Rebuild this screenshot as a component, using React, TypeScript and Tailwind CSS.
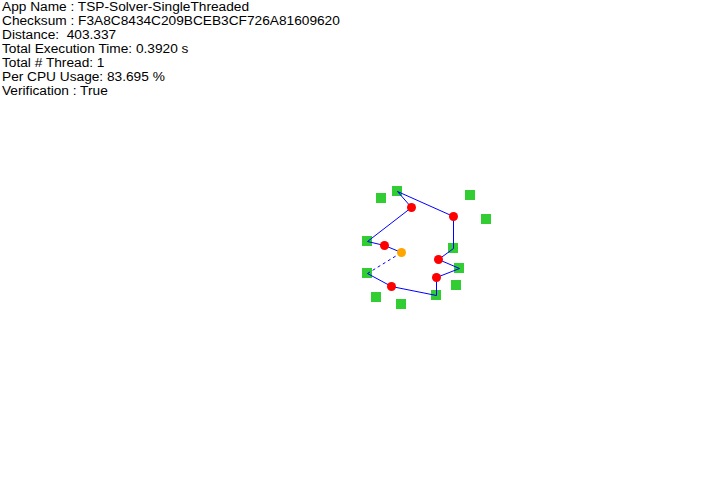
import React from "react";

const lines = [
  "App Name : TSP-Solver-SingleThreaded",
  "Checksum : F3A8C8434C209BCEB3CF726A81609620",
  "Distance:  403.337",
  "Total Execution Time: 0.3920 s",
  "Total # Thread: 1",
  "Per CPU Usage: 83.695 %",
  "Verification : True",
];

const squares: [number, number][] = [
  [381, 198], [397, 191], [470, 195], [486, 219], [367, 241], [453, 248],
  [459, 268], [367, 273], [456, 285], [436, 295], [376, 297], [401, 304],
];

const reds: [number, number][] = [
  [411, 207], [453, 216], [384, 245], [438, 259], [436, 277], [391, 286],
];

const path: [number, number][] = [
  [401, 252], [384, 245], [367, 241], [411, 207], [397, 191], [453, 216],
  [453, 248], [438, 259], [459, 268], [436, 277], [436, 295], [391, 286], [367, 273],
];

export default function App() {
  const pts = path.map(([x, y]) => `${x + 0.5},${y + 0.5}`).join(" ");
  return (
    <div className="relative w-[726px] h-[500px] bg-white overflow-hidden">
      <div className="relative z-10 pl-[2px] text-[13.7px] leading-[14px] text-black" style={{ fontFamily: '"Liberation Sans", Arial, sans-serif' }}>
        {lines.map((l) => (
          <div key={l} className="whitespace-pre">{l}</div>
        ))}
      </div>
      <svg className="absolute left-0 top-0" width={726} height={500} viewBox="0 0 726 500">
        {squares.map(([x, y], i) => (
          <rect key={i} x={x - 5} y={y - 5} width={10} height={10} fill="#32cd32" />
        ))}
        <polyline points={pts} fill="none" stroke="#0000ff" strokeWidth={1} />
        <line x1={367.5} y1={273.5} x2={401.5} y2={252.5} stroke="#0000ff" strokeWidth={1} strokeDasharray="3 3" />
        {reds.map(([x, y], i) => (
          <circle key={i} cx={x + 0.5} cy={y + 0.5} r={4.5} fill="#ff0000" />
        ))}
        <circle cx={401.5} cy={252.5} r={4.5} fill="#ffa500" />
      </svg>
    </div>
  );
}
